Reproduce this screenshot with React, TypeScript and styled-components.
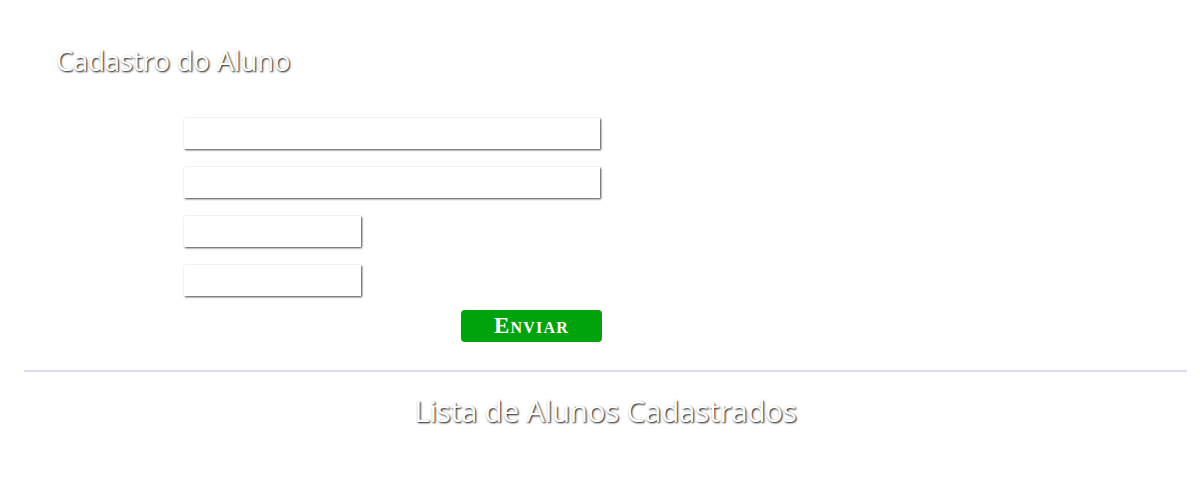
import React from 'react';
import styled, { createGlobalStyle } from 'styled-components';

const GlobalStyle = createGlobalStyle`
  body {
    margin: 0;
    background: #ffffff;
    font-family: 'Open Sans', 'Liberation Sans', sans-serif;
  }
`;

const Page = styled.div`
  padding: 0 13px 0 24px;
`;

const Title = styled.h1`
  margin: 0;
  padding: 45px 0 0 32px;
  height: 72px;
  box-sizing: border-box;
  font-family: 'Open Sans', sans-serif;
  font-weight: 400;
  font-size: 27.5px;
  line-height: 32px;
  letter-spacing: -0.2px;
  color: #ffffff;
  text-shadow: 1px 1px 2px #111;
`;

const Form = styled.form`
  display: flex;
  flex-direction: column;
  gap: 18px;
  width: 418px;
  margin: 46px 0 0 160px;
`;

const Input = styled.input<{ $short?: boolean }>`
  width: ${(p) => (p.$short ? '177px' : '416px')};
  height: 31px;
  box-sizing: border-box;
  border: none;
  outline: none;
  background: #fff;
  box-shadow: 1px 1px 2px #444;
  font-family: 'Open Sans', sans-serif;
  font-size: 15px;
`;

const Submit = styled.button`
  align-self: flex-end;
  width: 141px;
  height: 32px;
  margin-top: -4px;
  border: none;
  border-radius: 4px;
  background: #00a30c;
  color: #ffffff;
  font-family: 'Liberation Serif', serif;
  font-weight: bold;
  font-variant: small-caps;
  font-size: 23px;
  letter-spacing: 1.2px;
  line-height: 30px;
  padding: 0;
`;

const Divider = styled.hr`
  margin: 28px 0 0;
  border: none;
  height: 2px;
  background: #dcdcf8;
`;

const ListTitle = styled.h2`
  margin: 20px 0 0;
  text-align: center;
  font-family: 'Open Sans', sans-serif;
  font-weight: 400;
  font-size: 29.5px;
  line-height: 38px;
  letter-spacing: -0.2px;
  color: #ffffff;
  text-shadow: 1px 1px 2px #111;
`;

export default function App() {
  return (
    <Page>
      <GlobalStyle />
      <Title>Cadastro do Aluno</Title>
      <Form onSubmit={(e) => e.preventDefault()}>
        <Input type="text" />
        <Input type="text" />
        <Input type="text" $short />
        <Input type="text" $short />
        <Submit type="submit">Enviar</Submit>
      </Form>
      <Divider />
      <ListTitle>Lista de Alunos Cadastrados</ListTitle>
    </Page>
  );
}
